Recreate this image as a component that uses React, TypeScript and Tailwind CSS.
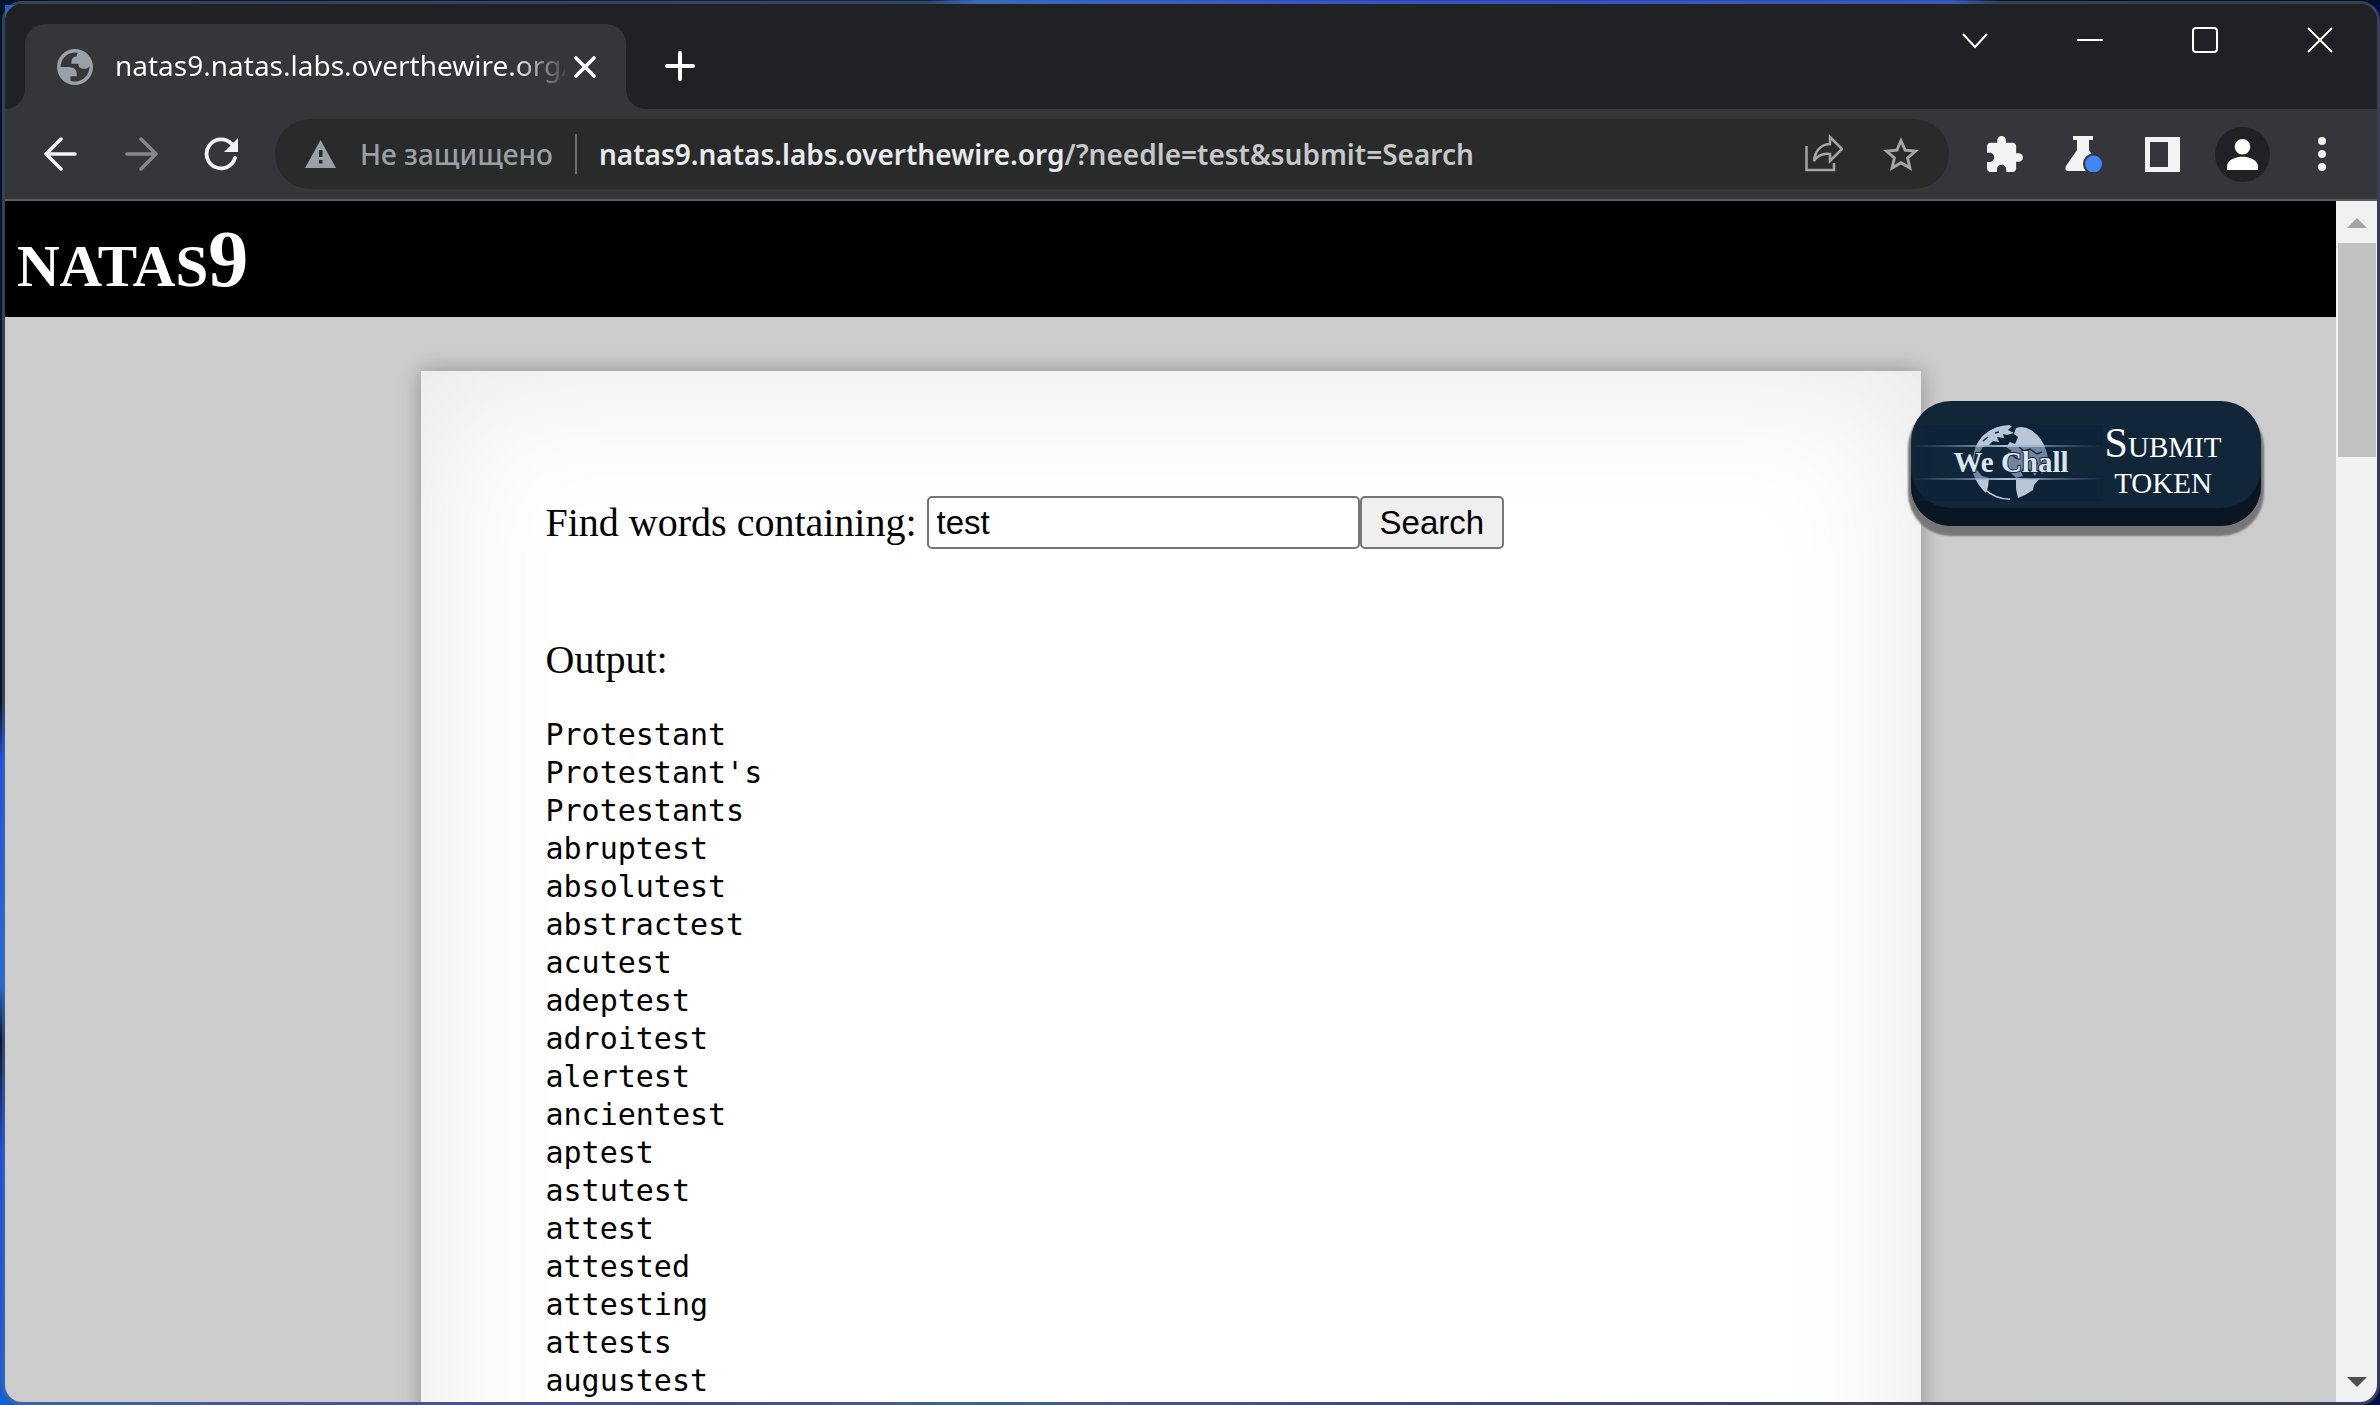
import React from "react";

const words = [
  "Protestant", "Protestant's", "Protestants", "abruptest", "absolutest", "abstractest",
  "acutest", "adeptest", "adroitest", "alertest", "ancientest", "aptest", "astutest",
  "attest", "attested", "attesting", "attests", "augustest",
];

function TabStrip() {
  return (
    <header className="flex h-[105px] shrink-0 bg-[#202124] pt-5 pl-5">
      <div className="relative flex h-[85px] w-[601px] items-center rounded-t-[20px] bg-[#35363a] pl-8 pr-[25px]">
        <svg className="absolute bottom-0 -left-5 size-5" viewBox="0 0 20 20" fill="#35363a" aria-hidden="true">
          <path d="M20 0A20 20 0 0 1 0 20H20Z" />
        </svg>
        <svg className="absolute bottom-0 -right-5 size-5" viewBox="0 0 20 20" fill="#35363a" aria-hidden="true">
          <path d="M0 0A20 20 0 0 0 20 20H0Z" />
        </svg>
        <svg className="size-9 shrink-0" viewBox="2 2 20 20" fill="#9aa0a6" fillRule="evenodd" aria-hidden="true">
          <path d="M12 2C6.48 2 2 6.48 2 12s4.48 10 10 10 10-4.48 10-10S17.52 2 12 2zM4 12h4.400c3.407.022 4.922 1.730 4.543 5.127H9.488v2.470a8.004 8.004 0 0 0 10.498-8.083C19.327 12.504 18.332 13 17 13c-2.137 0-3.206-.916-3.206-2.750h-3.748c-.274-2.728.683-4.092 2.870-4.092 0-.975.327-1.597.811-1.970A8.004 8.004 0 0 0 4 12z" />
        </svg>
        <span className="mb-1 ml-[22px] min-w-0 flex-1 overflow-hidden whitespace-nowrap bg-gradient-to-r from-white from-88% to-white/10 bg-clip-text font-['Noto_Sans','Open_Sans',sans-serif] text-[28px] leading-10 text-transparent">
          natas9.natas.labs.overthewire.org/
        </span>
        <button aria-label="Close tab" className="ml-1 flex size-8 items-center justify-center">
          <svg className="size-6" viewBox="0 0 24 24" fill="none" stroke="#fff" strokeWidth="3.600" strokeLinecap="round" aria-hidden="true">
            <path d="M3 3L21 21M21 3L3 21" />
          </svg>
        </button>
      </div>
      <button aria-label="New tab" className="ml-[34px] mt-[22px] flex size-10 items-center justify-center">
        <svg className="size-[30px]" viewBox="0 0 30 30" fill="none" stroke="#fff" strokeWidth="4" strokeLinecap="round" aria-hidden="true">
          <path d="M15 2V28M2 15H28" />
        </svg>
      </button>
      <div className="-mt-5 ml-auto flex h-[72px] text-white">
        <button aria-label="Search tabs" className="flex w-[115px] items-center justify-center">
          <svg className="size-[26px]" viewBox="0 0 26 26" fill="none" stroke="currentColor" strokeWidth="2" aria-hidden="true"><path d="M1 7L13 20L25 7" /></svg>
        </button>
        <button aria-label="Minimize" className="flex w-[115px] items-center justify-center">
          <svg className="size-[26px]" viewBox="0 0 26 26" fill="none" stroke="currentColor" strokeWidth="2" aria-hidden="true"><path d="M0 13H26" /></svg>
        </button>
        <button aria-label="Maximize" className="flex w-[115px] items-center justify-center">
          <svg className="size-[26px]" viewBox="0 0 26 26" fill="none" stroke="currentColor" strokeWidth="2" aria-hidden="true"><rect x="1" y="1" width="24" height="24" rx="3" /></svg>
        </button>
        <button aria-label="Close" className="flex w-[115px] items-center justify-center">
          <svg className="size-[26px]" viewBox="0 0 26 26" fill="none" stroke="currentColor" strokeWidth="2" aria-hidden="true"><path d="M1 1L25 25M25 1L1 25" /></svg>
        </button>
      </div>
    </header>
  );
}

function Toolbar() {
  return (
    <nav className="flex h-[92px] shrink-0 items-center border-b-2 border-[#5b5c5f] bg-[#35363a] pr-[51px] text-[#f1f3f4]">
      <button aria-label="Back" className="ml-9 flex size-10 items-center justify-center">
        <svg className="size-[34px]" viewBox="0 0 34 34" fill="none" stroke="currentColor" strokeWidth="3.500" strokeLinecap="round" strokeLinejoin="round" aria-hidden="true"><path d="M31 17H3M17 2L2 17L17 32" /></svg>
      </button>
      <button aria-label="Forward" className="ml-10 flex size-10 items-center justify-center text-[#87888b]">
        <svg className="size-[34px]" viewBox="0 0 34 34" fill="none" stroke="currentColor" strokeWidth="3.500" strokeLinecap="round" strokeLinejoin="round" aria-hidden="true"><path d="M3 17H31M17 2L32 17L17 32" /></svg>
      </button>
      <button aria-label="Reload" className="ml-10 flex size-10 items-center justify-center">
        <svg className="size-[34px]" viewBox="0 0 34 34" fill="currentColor" aria-hidden="true">
          <path d="M31 21A14.500 14.500 0 1 1 27.500 6.800" fill="none" stroke="currentColor" strokeWidth="3.800" strokeLinecap="round" />
          <path d="M34 1V15H20Z" />
        </svg>
      </button>
      <div className="ml-[34px] flex h-[70px] min-w-0 flex-1 items-center rounded-full bg-[#292a2a] px-[30px]">
        <svg className="h-7 w-[31px] shrink-0" viewBox="0 0 31 28" aria-hidden="true">
          <path d="M15.500 0L31 28H0Z" fill="#9aa0a6" />
          <path d="M14 10h3.500v7H14zM14 20h3.500v3.500H14z" fill="#292a2a" />
        </svg>
        <span className="ml-6 whitespace-nowrap font-['Noto_Sans','Open_Sans',sans-serif] text-[28px] leading-10 font-medium text-[#9aa0a6]">Не защищено</span>
        <span className="ml-[22px] h-10 w-0.5 bg-[#6d6e70]" />
        <div className="ml-[22px] min-w-0 flex-1 truncate font-['Noto_Sans','Open_Sans',sans-serif] text-[28px] leading-10 font-semibold text-[#c6c7c8]">
          <span className="text-[#e8eaed]">natas9.natas.labs.overthewire.org</span>/?needle=test&amp;submit=Search
        </div>
        <button aria-label="Share" className="shrink-0 text-[#a5a5a5]">
          <svg className="h-10 w-[38px]" viewBox="0 0 38 40" fill="none" stroke="currentColor" strokeWidth="2.500" aria-hidden="true">
            <path d="M1.500 12V36H29V29" />
            <path d="M9 27C10 16 17 10 25 10V3L37 15L25 27V20C18 19 13 21 9 27Z" />
          </svg>
        </button>
        <button aria-label="Bookmark" className="ml-10 shrink-0 text-[#a5a5a5]">
          <svg className="size-9" viewBox="2 2 20 19" fill="currentColor" aria-hidden="true">
            <path d="m22 9.240-7.190-.620L12 2 9.190 8.630 2 9.240l5.460 4.730L5.820 21 12 17.270 18.180 21l-1.630-7.030L22 9.240zM12 15.400l-3.760 2.270 1-4.280-3.320-2.880 4.380-.380L12 6.100l1.710 4.040 4.380.380-3.320 2.880 1 4.280L12 15.400z" />
          </svg>
        </button>
      </div>
      <button aria-label="Extensions" className="ml-[38px]">
        <svg className="size-9" viewBox="2 1 21 21" fill="currentColor" aria-hidden="true">
          <path d="M20.500 11H19V7c0-1.100-.9-2-2-2h-4V3.500C13 2.120 11.880 1 10.500 1S8 2.120 8 3.500V5H4c-1.100 0-1.990.9-1.990 2v3.800H3.500c1.490 0 2.700 1.210 2.700 2.700s-1.210 2.700-2.700 2.700H2V20c0 1.100.9 2 2 2h3.800v-1.500c0-1.490 1.210-2.700 2.700-2.700 1.490 0 2.700 1.210 2.700 2.700V22H17c1.100 0 2-.9 2-2v-4h1.500c1.380 0 2.500-1.120 2.500-2.500S21.880 11 20.500 11z" />
        </svg>
      </button>
      <button aria-label="Experiments" className="ml-[42px]">
        <svg className="h-9 w-[37px]" viewBox="0 0 37 36" aria-hidden="true">
          <path d="M8 0H28V4H24V14L34 30Q36 35 31 35H4Q-1 35 1 30L12 14V4H8Z" fill="#f1f3f4" />
          <circle cx="28.500" cy="28" r="10.500" fill="#35363a" />
          <circle cx="28.500" cy="28" r="8.500" fill="#4285f4" />
        </svg>
      </button>
      <button aria-label="Side panel" className="ml-[43px]">
        <svg className="size-[35px]" viewBox="0 0 35 35" fill="#f1f3f4" fillRule="evenodd" aria-hidden="true"><path d="M0 0H35V35H0ZM5 5V30H23V5Z" /></svg>
      </button>
      <button aria-label="Profile" className="ml-[35px] flex size-[55px] items-center justify-center rounded-full bg-[#202124]">
        <svg className="size-[31px]" viewBox="4 4 16 16" fill="#fff" aria-hidden="true">
          <path d="M12 12c2.210 0 4-1.790 4-4s-1.790-4-4-4-4 1.790-4 4 1.790 4 4 4zm0 1.200c-3 0-8 1.300-8 5V20h16v-1.800c0-3.700-5-5-8-5z" />
        </svg>
      </button>
      <button aria-label="Menu" className="ml-[48px]">
        <svg className="h-9 w-2" viewBox="0 0 8 36" fill="#f1f3f4" aria-hidden="true"><circle cx="4" cy="5" r="4" /><circle cx="4" cy="18" r="4" /><circle cx="4" cy="31" r="4" /></svg>
      </button>
    </nav>
  );
}

function WeChallLogo() {
  return (
    <svg className="h-[76px] w-[192px] shrink-0" viewBox="0 0 192 76" aria-hidden="true">
      <defs>
        <linearGradient id="glow" x1="0" x2="1">
          <stop offset="0" stopColor="#6f8fb4" stopOpacity="0" />
          <stop offset=".5" stopColor="#a9c0dc" />
          <stop offset="1" stopColor="#6f8fb4" stopOpacity="0" />
        </linearGradient>
        <linearGradient id="strip" x1="0" x2="1">
          <stop offset="0" stopColor="#0e2238" stopOpacity="0" />
          <stop offset=".12" stopColor="#0e2238" />
          <stop offset="1" stopColor="#0e2238" />
        </linearGradient>
        <clipPath id="band"><rect y="22" width="192" height="32" /></clipPath>
        <g id="land">
          <path d="M99 0A37 37 0 0 0 99 75V73.500A36 36 0 0 1 99 1.500Z" />
          <path d="M63 30Q65 13 80 5Q90 0 101 1L97 5L103 8L96 10L92 9L93 13L86 12L88 17L82 16L78 20L72 22L68 28L65 27Z" />
          <path d="M105 3Q112 0 120 5Q131 12 135 25Q139 37 135 45L131 49L128 43L124 51L120 45L113 42L110 47L112 51L105 53L101 49L97 45L93 38L96 28L101 26L95 22L99 17L104 19L107 12L103 9Z" />
          <path d="M62 36L66 45L71 51L78 53L77 62L75 68Q66 60 62 48Z" />
          <path d="M105 53L114 54L121 54L129 53L123 60L122 65L114 70L107 73L105 64Z" />
        </g>
      </defs>
      <rect width="192" height="76" fill="url(#strip)" />
      <use href="#land" fill="#b9c6d6" />
      <g clipPath="url(#band)">
        <rect x="20" y="22" width="172" height="32" fill="#12263a" />
        <use href="#land" fill="#72859f" />
      </g>
      <g fill="none" stroke="#12263a" strokeWidth="1.500">
        <path d="M108 22L113 26L119 24L126 29L131 27M112 33L120 35L127 39M84 8L88 7M72 16L77 12M101 30L106 34" />
      </g>
      <rect y="20" width="192" height="2" fill="url(#glow)" />
      <rect y="53" width="192" height="2" fill="url(#glow)" />
      <text x="100" y="47" textAnchor="middle" fontFamily="Liberation Serif, serif" fontWeight="700" fontSize="29" fill="#dbe4f1" stroke="#12263a" strokeWidth="2" paintOrder="stroke">We Chall</text>
    </svg>
  );
}

function Page() {
  return (
    <main className="relative min-w-0 flex-1 overflow-hidden bg-[#ccc] font-['Liberation_Serif',serif] text-black">
      <h1 className="h-[116px] bg-black pl-3 text-[80px] leading-[116px] font-bold text-white [font-variant:small-caps]">
        <span className="text-[84px] leading-none">natas</span>9
      </h1>
      <section className="mx-auto mt-[54px] min-h-[1300px] w-[1500px] max-w-full bg-white px-[125px] pt-[125px] shadow-[0_0_20px_rgba(0,0,0,0.3),inset_0_0_150px_rgba(0,0,0,0.1)]">
        <form className="flex items-center text-[40px] leading-[52px]" onSubmit={(e) => e.preventDefault()}>
          <label htmlFor="needle">Find words containing:</label>
          <input id="needle" defaultValue="test" className="ml-2.5 h-[53px] w-[433px] rounded-[5px] border-2 border-[#767676] bg-white px-2 font-['Liberation_Sans',sans-serif] text-[33px]" />
          <button className="h-[53px] rounded-[5px] border-2 border-[#767676] bg-[#efefef] px-[18px] font-['Liberation_Sans',sans-serif] text-[33px] leading-[48px]">Search</button>
        </form>
        <p className="mt-[84px] text-[40px] leading-[54px]">Output:</p>
        <pre className="mt-[29px] font-['DejaVu_Sans_Mono',monospace] text-[30px] leading-[38px]">{words.join("\n")}</pre>
      </section>
      <button className="absolute top-[200px] right-[75px] flex h-[125px] w-[350px] items-start rounded-[40px] bg-[#122639] pt-6 text-white shadow-[inset_0_-18px_0_#0a1621,0_7px_2px_3px_#777]">
        <WeChallLogo />
        <span className="w-[120px] text-center text-[42px] leading-9 [font-variant:small-caps]">Submit token</span>
      </button>
    </main>
  );
}

function Scrollbar() {
  return (
    <div className="flex w-[41px] shrink-0 flex-col items-center bg-[#f1f1f1]" aria-hidden="true">
      <svg className="mt-[17px] h-2.5 w-5" viewBox="0 0 20 10" fill="#a3a3a3"><path d="M10 0L20 10H0Z" /></svg>
      <div className="mt-[15px] h-[214px] w-[38px] bg-[#c1c1c1]" />
      <svg className="mt-auto mb-[15px] h-2.5 w-5" viewBox="0 0 20 10" fill="#505050"><path d="M0 0H20L10 10Z" /></svg>
    </div>
  );
}

export default function App() {
  return (
    <div className="h-screen bg-[linear-gradient(90deg,#04142f_0%,#0a1f52_39%,#1f6cf0_41%,#1a3cf0_60%,#1a50e0_82%,#05122e_84%,#030f28_100%),linear-gradient(180deg,#04142f_0%,#04142f_50%,#1450e8_54%,#1a6fe0_70%,#06163c_74%,#1450e0_82%,#1260d8_100%),linear-gradient(90deg,#1260d8_0%,#1b2fb0_30%,#0f5fb8_40%,#1420a8_60%,#081640_80%,#02104a_100%)] bg-[size:100%_5px,5px_100%,100%_100%] bg-no-repeat pt-px pl-0.5">
      <div className="flex h-full flex-col overflow-hidden rounded-[20px] border-3 border-[#62666e]/55">
        <TabStrip />
        <Toolbar />
        <div className="flex min-h-0 flex-1">
          <Page />
          <Scrollbar />
        </div>
      </div>
    </div>
  );
}
